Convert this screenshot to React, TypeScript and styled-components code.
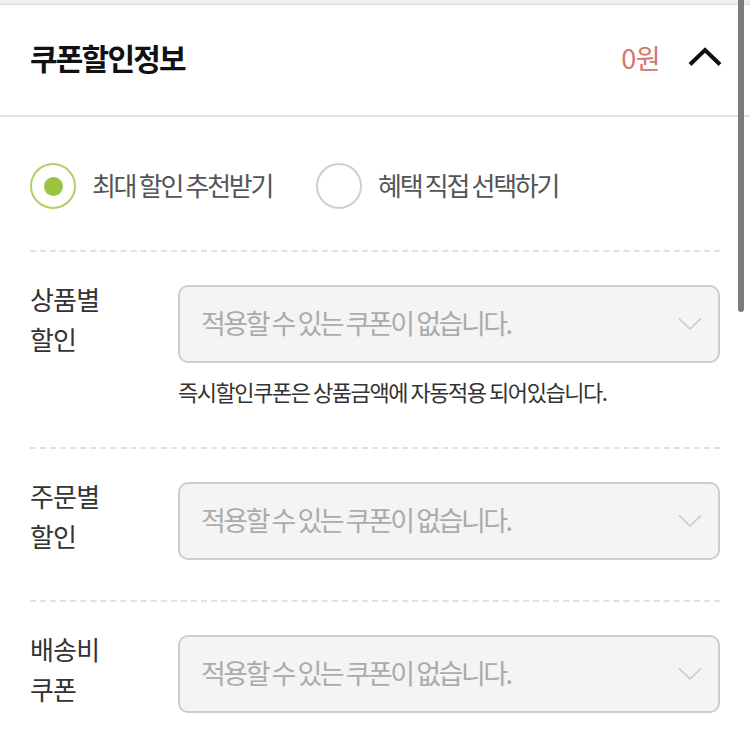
import React, { FunctionComponent } from 'react';
import styled, { createGlobalStyle } from 'styled-components';

const GlobalStyle = createGlobalStyle`
  html, body {
    margin: 0;
    padding: 0;
    background: #fff;
    overflow: hidden;
  }
  body {
    font-family: "Noto Sans CJK KR", "Noto Sans", sans-serif;
    color: #333;
  }
`;

type RowProps = {
  label: string[];
  note?: string;
};

const CouponRow: FunctionComponent<RowProps> = ({ label, note }) => (
  <Row>
    <RowMain>
      <RowLabel>
        {label.map((line) => (
          <span key={line}>{line}</span>
        ))}
      </RowLabel>
      <SelectBox>
        <span>적용할 수 있는 쿠폰이 없습니다.</span>
        <svg width="24" height="14" viewBox="0 0 24 14">
          <polyline points="1,1.5 12,12 23,1.5" fill="none" stroke="#c9c9c9" strokeWidth="1.6" />
        </svg>
      </SelectBox>
    </RowMain>
    {note && <Note>{note}</Note>}
  </Row>
);

const App: FunctionComponent = () => {
  return (
    <>
      <GlobalStyle />
      <Page>
        <TopStrip />
        <Header>
          <Title>쿠폰할인정보</Title>
          <HeaderRight>
            <Amount>0원</Amount>
            <svg width="34" height="20" viewBox="0 0 34 20">
              <polyline points="2,17.5 17,3 32,17.5" fill="none" stroke="#111" strokeWidth="4" strokeLinejoin="miter" />
            </svg>
          </HeaderRight>
        </Header>
        <Body>
          <RadioGroup>
            <RadioItem>
              <Radio checked />
              <RadioText>최대 할인 추천받기</RadioText>
            </RadioItem>
            <RadioItem>
              <Radio />
              <RadioText>혜택 직접 선택하기</RadioText>
            </RadioItem>
          </RadioGroup>
          <CouponRow label={['상품별', '할인']} note="즉시할인쿠폰은 상품금액에 자동적용 되어있습니다." />
          <CouponRow label={['주문별', '할인']} />
          <CouponRow label={['배송비', '쿠폰']} />
        </Body>
        <ScrollThumb />
      </Page>
    </>
  );
};

export default App;

const Page = styled.div`
  position: relative;
  width: 750px;
  height: 745px;
  overflow: hidden;
  background: #fff;
`;

const TopStrip = styled.div`
  height: 4px;
  background: #efefef;
  border-bottom: 1px solid #dedede;
`;

const Header = styled.div`
  display: flex;
  align-items: center;
  justify-content: space-between;
  height: 104px;
  padding: 0 30px 6px 30px;
  border-bottom: 2px solid #e4e4e4;
`;

const Title = styled.h2`
  margin: 0;
  font-size: 30px;
  font-weight: 700;
  letter-spacing: -1.8px;
  color: #111;
`;

const HeaderRight = styled.div`
  display: flex;
  align-items: center;
  gap: 28px;
  svg {
    margin-right: -2px;
  }
`;

const Amount = styled.span`
  font-size: 27px;
  color: #d4776d;
  letter-spacing: -0.5px;
`;

const Body = styled.div`
  padding: 0 30px;
`;

const RadioGroup = styled.div`
  display: flex;
  align-items: center;
  gap: 44px;
  padding: 46px 0 41px;
  border-bottom: 2px dashed #e2e2e2;
`;

const RadioItem = styled.label`
  display: flex;
  align-items: center;
  gap: 16px;
`;

const Radio = styled.span<{ checked?: boolean }>`
  box-sizing: border-box;
  width: 46px;
  height: 46px;
  border-radius: 50%;
  border: 2px solid ${(p) => (p.checked ? '#b3cf66' : '#cfcfcf')};
  display: flex;
  align-items: center;
  justify-content: center;
  &::after {
    content: '';
    display: ${(p) => (p.checked ? 'block' : 'none')};
    width: 19px;
    height: 19px;
    border-radius: 50%;
    background: #9cc443;
  }
`;

const RadioText = styled.span`
  font-size: 26px;
  color: #555;
  letter-spacing: -2.3px;
  margin-top: -4px;
`;

const Row = styled.div`
  padding: 33px 0 40px;
  border-bottom: 2px dashed #e2e2e2;
  &:last-child {
    border-bottom: none;
  }
`;

const RowMain = styled.div`
  display: flex;
  align-items: center;
`;

const RowLabel = styled.div`
  width: 148px;
  flex-shrink: 0;
  display: flex;
  flex-direction: column;
  font-size: 26px;
  line-height: 40px;
  letter-spacing: -0.8px;
  color: #333;
  margin-top: -10px;
`;

const SelectBox = styled.div`
  flex: 1;
  box-sizing: border-box;
  height: 78px;
  display: flex;
  align-items: center;
  justify-content: space-between;
  padding: 0 16px 0 21px;
  background: #f4f4f4;
  border: 2px solid #cdcdcd;
  border-radius: 10px;
  font-size: 27px;
  letter-spacing: -2.5px;
  color: #ababab;
  span {
    margin-top: -3px;
  }
`;

const Note = styled.p`
  margin: 15px 0 3px 148px;
  font-size: 22px;
  line-height: 26px;
  letter-spacing: -1.45px;
  color: #333;
`;

const ScrollThumb = styled.div`
  position: absolute;
  top: 0;
  right: 6px;
  width: 6px;
  height: 312px;
  background: #7b7b7b;
  border-radius: 0 0 3px 3px;
`;
